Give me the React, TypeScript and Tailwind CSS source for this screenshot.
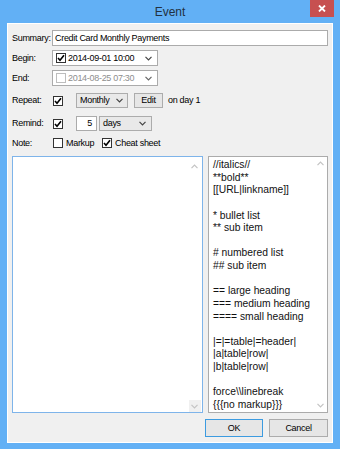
import React from 'react'

const Chevron = ({ color = '#444' }: { color?: string }) => (
    <svg width="7" height="5" viewBox="0 0 7 5" className="shrink-0">
        <polyline points="0.5,0.8 3.5,3.8 6.5,0.8" fill="none" stroke={color} strokeWidth="1.2" />
    </svg>
)

const ChevronUp = ({ color = '#c3c3c3' }: { color?: string }) => (
    <svg width="7" height="5" viewBox="0 0 7 5" className="shrink-0">
        <polyline points="0.5,4.2 3.5,1.2 6.5,4.2" fill="none" stroke={color} strokeWidth="1.2" />
    </svg>
)

const Check = ({ checked, disabled }: { checked?: boolean; disabled?: boolean }) => (
    <span
        className={
            'w-[10px] h-[10px] shrink-0 bg-white border flex items-center justify-center ' +
            (disabled ? 'border-[#bdbdbd]' : 'border-[#333]')
        }
    >
        {checked && (
            <svg width="8" height="8" viewBox="0 0 8 8">
                <polyline points="1,4 3,6.3 7,1.2" fill="none" stroke="#000" strokeWidth="1.6" />
            </svg>
        )}
    </span>
)

const Label = ({ children }: { children: React.ReactNode }) => (
    <span className="w-[40px] shrink-0 leading-none">{children}</span>
)

const Picker = ({ value, checked, disabled }: { value: string; checked?: boolean; disabled?: boolean }) => (
    <div className="w-[106px] h-[16px] border border-[#ababab] bg-white flex items-center pl-[3px] pr-[5px]">
        <Check checked={checked} disabled={disabled} />
        <span className={'ml-[2px] flex-1 leading-none ' + (disabled ? 'text-[#8e8e8e]' : 'text-black')}>
            {value}
        </span>
        <Chevron color={disabled ? '#666' : '#444'} />
    </div>
)

const cheat = [
    '//italics//',
    '**bold**',
    '[[URL|linkname]]',
    '',
    '* bullet list',
    '** sub item',
    '',
    '# numbered list',
    '## sub item',
    '',
    '== large heading',
    '=== medium heading',
    '==== small heading',
    '',
    '|=|=table|=header|',
    '|a|table|row|',
    '|b|table|row|',
    '',
    'force\\\\linebreak',
    '{{{no markup}}}',
]

export default function App() {
    return (
        <div className="w-[340px] h-[449px] bg-[#62b0f5] flex flex-col overflow-hidden whitespace-nowrap font-['Liberation_Sans',Arial,sans-serif] text-[9px] tracking-[-0.3px] text-black">
            {/* title bar */}
            <div className="h-[23px] relative flex items-center justify-center pt-[1px]">
                <span className="text-[12px] tracking-normal leading-none text-[#22313f]">Event</span>
                <div className="absolute right-[6px] top-0 w-[24px] h-[17px] bg-[#c75050] flex items-center justify-center">
                    <svg width="8" height="7" viewBox="0 0 8 7">
                        <line x1="1" y1="0.5" x2="7" y2="6.5" stroke="#fff" strokeWidth="1.8" />
                        <line x1="7" y1="0.5" x2="1" y2="6.5" stroke="#fff" strokeWidth="1.8" />
                    </svg>
                </div>
            </div>

            {/* client area */}
            <div className="mx-[7px] h-[420px] border border-white bg-[#f0f0f0] px-[4px] pt-[6px] pb-[5px] flex flex-col">
                <div className="h-[16px] flex items-center">
                    <Label>Summary:</Label>
                    <div className="flex-1 h-[16px] border border-[#ababab] bg-white flex items-center pl-[2px] leading-none">
                        Credit Card Monthly Payments
                    </div>
                </div>

                <div className="h-[16px] mt-[4px] flex items-center">
                    <Label>Begin:</Label>
                    <Picker value="2014-09-01 10:00" checked />
                </div>

                <div className="h-[16px] mt-[4px] flex items-center">
                    <Label>End:</Label>
                    <Picker value="2014-08-25 07:30" disabled />
                </div>

                <div className="h-[15px] mt-[7px] flex items-center">
                    <Label>Repeat:</Label>
                    <span className="ml-[1px]">
                        <Check checked />
                    </span>
                    <div className="ml-[13px] w-[52px] h-[15px] border border-[#acacac] bg-[#e9e9e9] flex items-center pl-[3px] pr-[4px]">
                        <span className="flex-1 leading-none">Monthly</span>
                        <Chevron />
                    </div>
                    <div className="ml-[6px] w-[29px] h-[15px] border border-[#acacac] bg-[#e6e6e6] flex items-center justify-center leading-none">
                        Edit
                    </div>
                    <span className="ml-[5px] leading-none">on day 1</span>
                </div>

                <div className="h-[15px] mt-[8px] flex items-center">
                    <Label>Remind:</Label>
                    <span className="ml-[1px]">
                        <Check checked />
                    </span>
                    <div className="ml-[13px] w-[21px] h-[15px] border border-[#ababab] bg-white flex items-center justify-end pr-[4px] leading-none">
                        5
                    </div>
                    <div className="ml-[2px] w-[53px] h-[15px] border border-[#acacac] bg-[#e9e9e9] flex items-center pl-[3px] pr-[5px]">
                        <span className="flex-1 leading-none">days</span>
                        <Chevron />
                    </div>
                </div>

                <div className="h-[14px] mt-[5px] flex items-center">
                    <Label>Note:</Label>
                    <span className="ml-[1px]">
                        <Check />
                    </span>
                    <span className="ml-[3px] w-[36px] leading-none">Markup</span>
                    <Check checked />
                    <span className="ml-[3px] leading-none">Cheat sheet</span>
                </div>

                <div className="h-[257px] mt-[6px] flex gap-[5px]">
                    <div className="w-[191px] border border-[#7eb4ea] bg-white flex">
                        <div className="flex-1" />
                        <div className="w-[13px] flex flex-col justify-between items-center mr-[1px]">
                            <div className="w-[12px] h-[12px] mt-[3px] flex items-center justify-center">
                                <ChevronUp />
                            </div>
                            <div className="w-[12px] h-[12px] bg-[#f0f0f0] flex items-center justify-center">
                                <Chevron color="#c3c3c3" />
                            </div>
                        </div>
                    </div>
                    <div className="flex-1 border border-[#ababab] bg-white flex">
                        <div className="flex-1 pl-[4px] pt-[2px] text-[10.3px] tracking-normal leading-[12.63px] text-[#111]">
                            {cheat.map((line, i) => (
                                <div key={i} className="h-[12.63px] whitespace-pre">
                                    {line}
                                </div>
                            ))}
                        </div>
                        <div className="w-[12px] flex flex-col justify-between items-center mr-[1px] py-[4px]">
                            <ChevronUp />
                            <Chevron color="#c3c3c3" />
                        </div>
                    </div>
                </div>

                <div className="h-[18px] mt-[6px] flex justify-end gap-[6px]">
                    <div className="w-[58px] h-[18px] border border-[#3c9be0] bg-[#e6e6e6] flex items-center justify-center leading-none">
                        OK
                    </div>
                    <div className="w-[59px] h-[18px] border border-[#acacac] bg-[#e6e6e6] flex items-center justify-center leading-none">
                        Cancel
                    </div>
                </div>
            </div>
        </div>
    )
}
